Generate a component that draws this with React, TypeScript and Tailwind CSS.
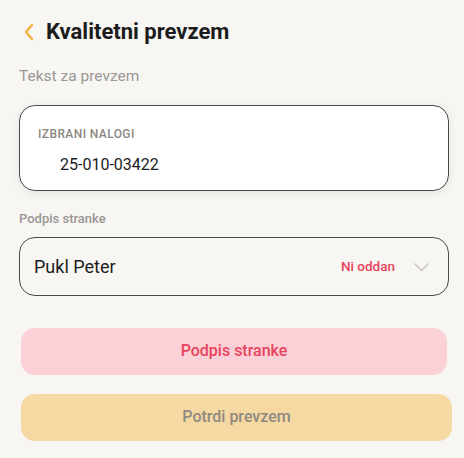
import React from 'react';

export default function App() {
  return (
    <div className="w-[464px] h-[458px] overflow-hidden bg-[#f7f6f3] font-['Roboto',sans-serif]">
      <header className="flex items-center pl-[22px] pt-[17px] h-[46px]">
        <svg width="14" height="20" viewBox="0 0 14 20" className="mr-[10px]">
          <path d="M10 3 L4 10 L10 17" fill="none" stroke="#f2b33d" strokeWidth="2.4" strokeLinecap="round" strokeLinejoin="round" />
        </svg>
        <h1 className="text-[22px] font-bold text-[#1c1c1c]">Kvalitetni prevzem</h1>
      </header>

      <div className="pl-[19px] pr-[15px]">
        <p className="mt-[19px] text-[15.5px] text-[#9a9794]">Tekst za prevzem</p>

        <div className="mt-[17px] h-[86px] rounded-[16px] border border-[#4a4a4a] bg-white shadow-[0_2px_8px_rgba(0,0,0,0.08)] pl-[18px] pt-[19px]">
          <div className="text-[12px] font-medium tracking-[0.4px] text-[#8c8781]">IZBRANI NALOGI</div>
          <div className="mt-[10px] pl-[22px] text-[16px] text-[#1c1c1c]">25-010-03422</div>
        </div>

        <p className="mt-[18px] text-[13px] font-medium text-[#9a9794]">Podpis stranke</p>

        <div className="mt-[8px] h-[59px] rounded-[16px] border border-[#4a4a4a] flex items-center pl-[14px] pr-[19px]">
          <span className="text-[18px] text-[#1c1c1c]">Pukl Peter</span>
          <span className="ml-auto text-[13.5px] font-medium text-[#e8445d]">Ni oddan</span>
          <svg width="15" height="9" viewBox="0 0 15 9" className="ml-[19px] mt-[2px]">
            <path d="M1 1 L7.5 7.5 L14 1" fill="none" stroke="#c9c6c2" strokeWidth="1.6" strokeLinecap="round" strokeLinejoin="round" />
          </svg>
        </div>

        <button className="mt-[32px] ml-[2px] w-[426px] h-[47px] rounded-[14px] bg-[#fbd0d6] text-[16px] font-medium text-[#e8445d]">
          Podpis stranke
        </button>
        <button className="mt-[19px] ml-[2px] w-[431px] h-[47px] rounded-[14px] bg-[#f5d8a2] text-[16px] font-medium text-[#8f8a80]">
          Potrdi prevzem
        </button>
      </div>
    </div>
  );
}
